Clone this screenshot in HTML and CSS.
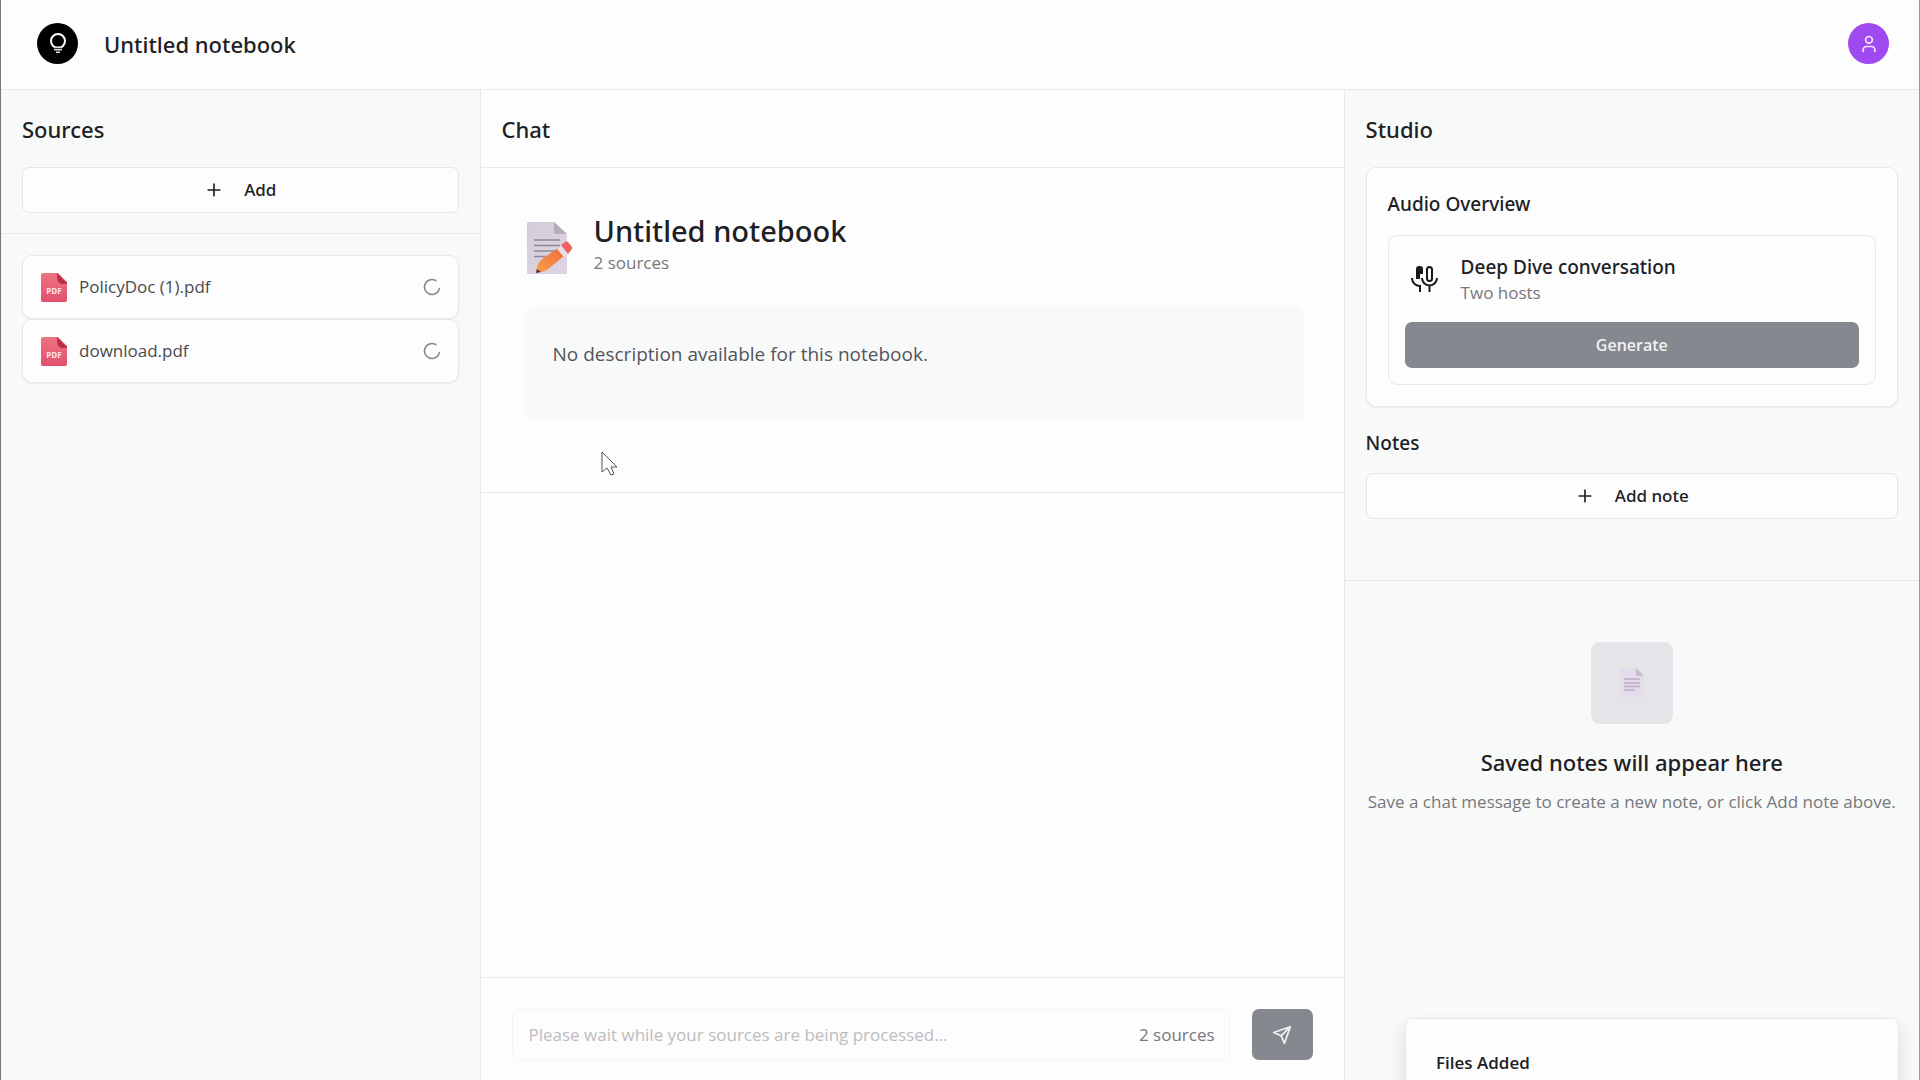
FILE: index.html
```html
<!DOCTYPE html>
<html lang="en">
  <head>
    <meta charset="UTF-8" />
    <meta name="viewport" content="width=device-width, initial-scale=1.0" />
    <title>Untitled notebook</title>
    <link rel="stylesheet" href="styles.css" />
  </head>
  <body>
    <!-- shared icons -->
    <svg class="sprite" aria-hidden="true">
      <defs>
        <linearGradient id="paper" x1="0" y1="0" x2="1" y2="1">
          <stop offset="0" stop-color="#d3ced9" />
          <stop offset="1" stop-color="#ddd3e3" />
        </linearGradient>
        <linearGradient id="pencil" x1="0" y1="1" x2="1" y2="0">
          <stop offset="0" stop-color="#fba04a" />
          <stop offset="1" stop-color="#ee6a3c" />
        </linearGradient>
        <linearGradient id="red" x1="0" y1="0" x2="0" y2="1">
          <stop offset="0" stop-color="#ee7484" />
          <stop offset="1" stop-color="#e2506a" />
        </linearGradient>
        <symbol id="icon-plus" viewBox="0 0 24 24">
          <path d="M5 12h14M12 5v14" fill="none" stroke="currentColor" stroke-width="2" stroke-linecap="round" />
        </symbol>
        <symbol id="icon-loader" viewBox="0 0 24 24">
          <path d="M21 12a9 9 0 1 1-6.2-8.56" fill="none" stroke="currentColor" stroke-width="2" stroke-linecap="round" transform="rotate(12 12 12)" />
        </symbol>
        <symbol id="icon-pdf" viewBox="0 0 26 29">
          <path d="M2 0h15l9 9v18a2 2 0 0 1-2 2H2a2 2 0 0 1-2-2V2a2 2 0 0 1 2-2z" fill="url(#red)" />
          <path d="M16 0l10 10v1h-4a6 6 0 0 1-6-6z" fill="#b92f47" />
          <text x="13" y="21" class="pdf-text" text-anchor="middle">PDF</text>
        </symbol>
      </defs>
    </svg>

    <div class="app">
      <header class="header">
        <a href="#" class="logo" aria-label="Home">
          <svg viewBox="0 0 24 24" width="24" height="24">
            <circle cx="12" cy="9" r="7" fill="none" stroke="#fff" stroke-width="2" />
            <path d="M8 14.500h8v4H8z" fill="#ddd" />
            <path d="M8 16.500h8" stroke="#333" stroke-width="1" />
            <path d="M10 19.500h4v1.500h-4z" fill="#ddd" />
          </svg>
        </a>
        <h1 class="header-title">Untitled notebook</h1>
        <button class="avatar" aria-label="Account">
          <svg viewBox="0 0 24 24" width="20" height="20" fill="none" stroke="#fde8ff" stroke-width="2" stroke-linecap="round">
            <circle cx="12" cy="7" r="4" />
            <path d="M19 21v-2a4 4 0 0 0-4-4H9a4 4 0 0 0-4 4v2" />
          </svg>
        </button>
      </header>

      <main class="panels">
        <aside class="sources">
          <div class="sources-head">
            <h2 class="panel-title">Sources</h2>
            <button class="btn-outline">
              <svg width="20" height="20"><use href="#icon-plus" /></svg>
              Add
            </button>
          </div>
          <ul class="source-list">
            <li class="source">
              <svg class="source-icon" width="26" height="29"><use href="#icon-pdf" /></svg>
              <span class="source-name">PolicyDoc (1).pdf</span>
              <svg class="loader" width="20" height="20"><use href="#icon-loader" /></svg>
            </li>
            <li class="source">
              <svg class="source-icon" width="26" height="29"><use href="#icon-pdf" /></svg>
              <span class="source-name">download.pdf</span>
              <svg class="loader" width="20" height="20"><use href="#icon-loader" /></svg>
            </li>
          </ul>
        </aside>

        <section class="chat">
          <div class="chat-head">
            <h2 class="panel-title">Chat</h2>
          </div>
          <div class="summary">
            <div class="summary-head">
              <svg viewBox="0 0 46 52" width="46" height="52">
                <path d="M1.500 0H27l13 12v38.500a1.500 1.500 0 0 1-1.500 1.500h-37A1.500 1.500 0 0 1 0 50.500v-49A1.500 1.500 0 0 1 1.500 0z" fill="url(#paper)" />
                <path d="M27 0l13 12H28.500A1.500 1.500 0 0 1 27 10.500z" fill="#b5adba" />
                <path d="M7 18h26M7 23.500h26M7 29h22M7 34.500h13" stroke="#8f8796" stroke-width="1.300" />
                <path d="M9 50q1-8 5-12L31 26l6 8-17 14q-5 3-11 2z" fill="url(#pencil)" />
                <path d="M30 27l5-4 7 8-5 4z" fill="#e9dfe8" />
                <path d="M34 23l4-3q2-1 3 0l4 5q1 2-1 3l-3 4z" fill="#f2605f" />
                <path d="M9 51l1-4 4 3z" fill="#4b2c58" />
              </svg>
              <div>
                <h3 class="summary-title">Untitled notebook</h3>
                <p class="muted">2 sources</p>
              </div>
            </div>
            <div class="description">No description available for this notebook.</div>
          </div>
          <div class="messages"></div>
          <form class="composer">
            <div class="field">
              <input type="text" class="field-input" aria-label="Message" placeholder="Please wait while your sources are being processed..." disabled />
              <span class="muted">2 sources</span>
            </div>
            <button type="button" class="send" aria-label="Send" disabled>
              <svg viewBox="0 0 24 24" width="20" height="20" fill="none" stroke="#f1f2f4" stroke-width="2" stroke-linecap="round" stroke-linejoin="round">
                <path d="M22 2L15 22l-4-9-9-4zM22 2L11 13" />
              </svg>
            </button>
          </form>
        </section>

        <aside class="studio">
          <div class="studio-head">
            <h2 class="panel-title">Studio</h2>
            <div class="card audio">
              <h3 class="card-title">Audio Overview</h3>
              <div class="card host">
                <div class="host-info">
                  <svg viewBox="0 0 28 27" width="28" height="27" fill="none" stroke="#18181b" stroke-width="2">
                    <path d="M5 14V4a3 3 0 0 1 3-3h1a3 3 0 0 1 3 3v5H9v5z" fill="#18181b" stroke="none" />
                    <rect x="16" y="2" width="5" height="14" rx="2.500" />
                    <path d="M1 13a8 8 0 0 0 9 8M9 20v7" />
                    <path d="M11 13a7 7 0 0 0 15 0M18.500 20v7" />
                  </svg>
                  <div>
                    <h4 class="card-title">Deep Dive conversation</h4>
                    <p class="muted">Two hosts</p>
                  </div>
                </div>
                <button class="generate" disabled>Generate</button>
              </div>
            </div>
            <h3 class="notes-title">Notes</h3>
            <button class="btn-outline">
              <svg width="20" height="20"><use href="#icon-plus" /></svg>
              Add note
            </button>
          </div>
          <div class="notes-empty">
            <div class="notes-icon">
              <svg viewBox="0 0 26 30" width="26" height="30">
                <path d="M1 0h16l8 8v20a1 1 0 0 1-1 1H2a1 1 0 0 1-1-1z" fill="#e4dcea" />
                <path d="M17 0l8 8h-8z" fill="#c5bdcc" />
                <path d="M5 11h16M5 15h16M5 18.500h16M5 22h11" stroke="#bda9c8" stroke-width="1.500" />
              </svg>
            </div>
            <h3 class="empty-title">Saved notes will appear here</h3>
            <p class="muted">Save a chat message to create a new note, or click Add note above.</p>
          </div>
        </aside>
      </main>

      <div class="toast" role="status">Files Added</div>

      <svg class="cursor" viewBox="0 0 17 26" width="17" height="26">
        <path d="M1 1v20l5-4 4 7 3-1-3-7h6z" fill="#fff" stroke="#555" stroke-linejoin="round" />
      </svg>
    </div>
  </body>
</html>
```
FILE: styles.css
```css
* {
  box-sizing: border-box;
}

body {
  margin: 0;
  font-family: "Open Sans", "Noto Sans", sans-serif;
  font-size: 17px;
  line-height: 24px;
  color: #202024;
  background-color: #fdfdfd;
}

h1,
h2,
h3,
h4,
p,
ul {
  margin: 0;
  padding: 0;
  font-weight: 500;
}

h1,
h2,
h3,
h4 {
  font-family: "Noto Sans", "Open Sans", sans-serif;
}

button,
input {
  font: inherit;
  color: inherit;
}

.sprite {
  position: absolute;
  width: 0;
  height: 0;
}

.app {
  position: relative;
  display: flex;
  flex-direction: column;
  height: 100vh;
  overflow: hidden;
  border-left: 1px solid #777;
  border-right: 1px solid #999;
}

/* Header */
.header {
  display: flex;
  align-items: center;
  padding: 23px 30px 25px 36px;
  border-bottom: 1px solid #e8eaea;
}

.logo,
.avatar {
  display: grid;
  place-items: center;
  width: 41px;
  height: 41px;
  padding: 0;
  border: 0;
  border-radius: 50%;
  background-color: #000;
}

.avatar {
  margin-left: auto;
  background-color: #9f4af0;
}

.header-title {
  margin-left: 26px;
  font-size: 22px;
}

/* Panels */
.panels {
  display: grid;
  grid-template-columns: 25fr 45fr 30fr;
  flex: 1;
  min-height: 0;
}

.sources,
.studio {
  min-width: 0;
  background-color: #f8f9f9;
}

.sources {
  border-right: 1px solid #e8eaea;
}

.studio {
  border-left: 1px solid #e8eaea;
}

.panel-title {
  font-size: 22px;
  line-height: 32px;
}

.sources-head {
  padding: 23px 21px 20px;
  border-bottom: 1px solid #e8eaea;
}

.sources-head .panel-title,
.studio-head .panel-title {
  margin-bottom: 22px;
}

.btn-outline {
  display: flex;
  align-items: center;
  justify-content: center;
  gap: 20px;
  width: 100%;
  height: 46px;
  border: 1px solid #e4e7e8;
  border-radius: 7px;
  background-color: #fdfdfd;
  font-family: "Noto Sans", "Open Sans", sans-serif;
  font-weight: 500;
}

.source-list {
  padding: 21px;
  list-style: none;
}

.source {
  display: flex;
  align-items: center;
  height: 64px;
  padding: 0 16px 0 18px;
  border: 1px solid #e6e8e9;
  border-radius: 10px;
  background-color: #fdfdfd;
  box-shadow: 0 1px 2px rgba(0, 0, 0, 0.06);
  font-weight: 400;
}

.source-name {
  flex: 1;
  margin-left: 12px;
  color: #4a4a4e;
}

.loader {
  color: #8a8a8e;
}

.pdf-text {
  font-size: 8px;
  font-weight: 700;
  fill: #ffe4e8;
}

/* Chat */
.chat {
  display: flex;
  flex-direction: column;
  min-width: 0;
}

.chat-head {
  padding: 23px 21px 22px;
  border-bottom: 1px solid #e8eaea;
}

.summary {
  padding: 42px 40px 72px 43px;
  border-bottom: 1px solid #e8eaea;
}

.summary-head {
  display: flex;
  align-items: flex-end;
  gap: 21px;
  padding: 0 3px;
}

.summary-title {
  font-size: 29px;
  line-height: 42px;
}

.muted {
  color: #77777c;
  font-size: 17px;
  line-height: 22px;
  font-weight: 400;
}

.description {
  min-height: 114px;
  margin-top: 32px;
  padding: 36px 29px;
  border-radius: 10px;
  background-color: #f8f9f9;
  color: #55555a;
  font-size: 19px;
}

.messages {
  flex: 1;
}

.composer {
  display: flex;
  gap: 22px;
  padding: 31px 31px 20px;
  border-top: 1px solid #e8eaea;
}

.field {
  display: flex;
  align-items: center;
  flex: 1;
  height: 51px;
  padding: 0 14px 0 16px;
  border: 1px solid #f4f5f5;
  border-radius: 7px;
}

.field-input {
  flex: 1;
  min-width: 0;
  padding: 0;
  border: 0;
  background: none;
}

.field-input::placeholder {
  color: #bcbcc0;
}

.send,
.generate {
  border: 0;
  border-radius: 7px;
  background-color: #85888e;
  color: #f1f2f4;
}

.send {
  display: grid;
  place-items: center;
  width: 61px;
  height: 51px;
}

/* Studio */
.studio-head {
  padding: 23px 21px 61px;
  border-bottom: 1px solid #e8eaea;
}

.card {
  border: 1px solid #e6e8e9;
  border-radius: 10px;
  background-color: #fdfdfd;
}

.audio {
  padding: 21px;
  box-shadow: 0 1px 2px rgba(0, 0, 0, 0.06);
}

.card-title,
.notes-title {
  font-size: 19px;
  line-height: 30px;
}

.host {
  margin-top: 16px;
  padding: 16px;
}

.host-info {
  display: flex;
  align-items: center;
  gap: 22px;
  padding: 0 6px;
}

.generate {
  display: block;
  width: 100%;
  height: 46px;
  margin-top: 18px;
  font-size: 16px;
  font-weight: 600;
}

.notes-title {
  margin: 21px 0 15px;
}

.notes-empty {
  display: flex;
  flex-direction: column;
  align-items: center;
  padding: 61px 20px;
  text-align: center;
}

.notes-icon {
  display: grid;
  place-items: center;
  width: 82px;
  height: 82px;
  border-radius: 9px;
  background-color: #e5e4e9;
}

.empty-title {
  margin: 23px 0 14px;
  font-size: 22px;
  line-height: 30px;
}

/* Overlays */
.toast {
  position: absolute;
  right: 20px;
  bottom: -40px;
  width: 494px;
  height: 102px;
  padding: 32px 30px;
  border: 1px solid #e4e7e8;
  border-radius: 7px;
  background-color: #fdfdfd;
  box-shadow: 0 10px 20px rgba(0, 0, 0, 0.12);
  font-weight: 600;
}

.cursor {
  position: absolute;
  left: 600px;
  top: 451px;
}
```
